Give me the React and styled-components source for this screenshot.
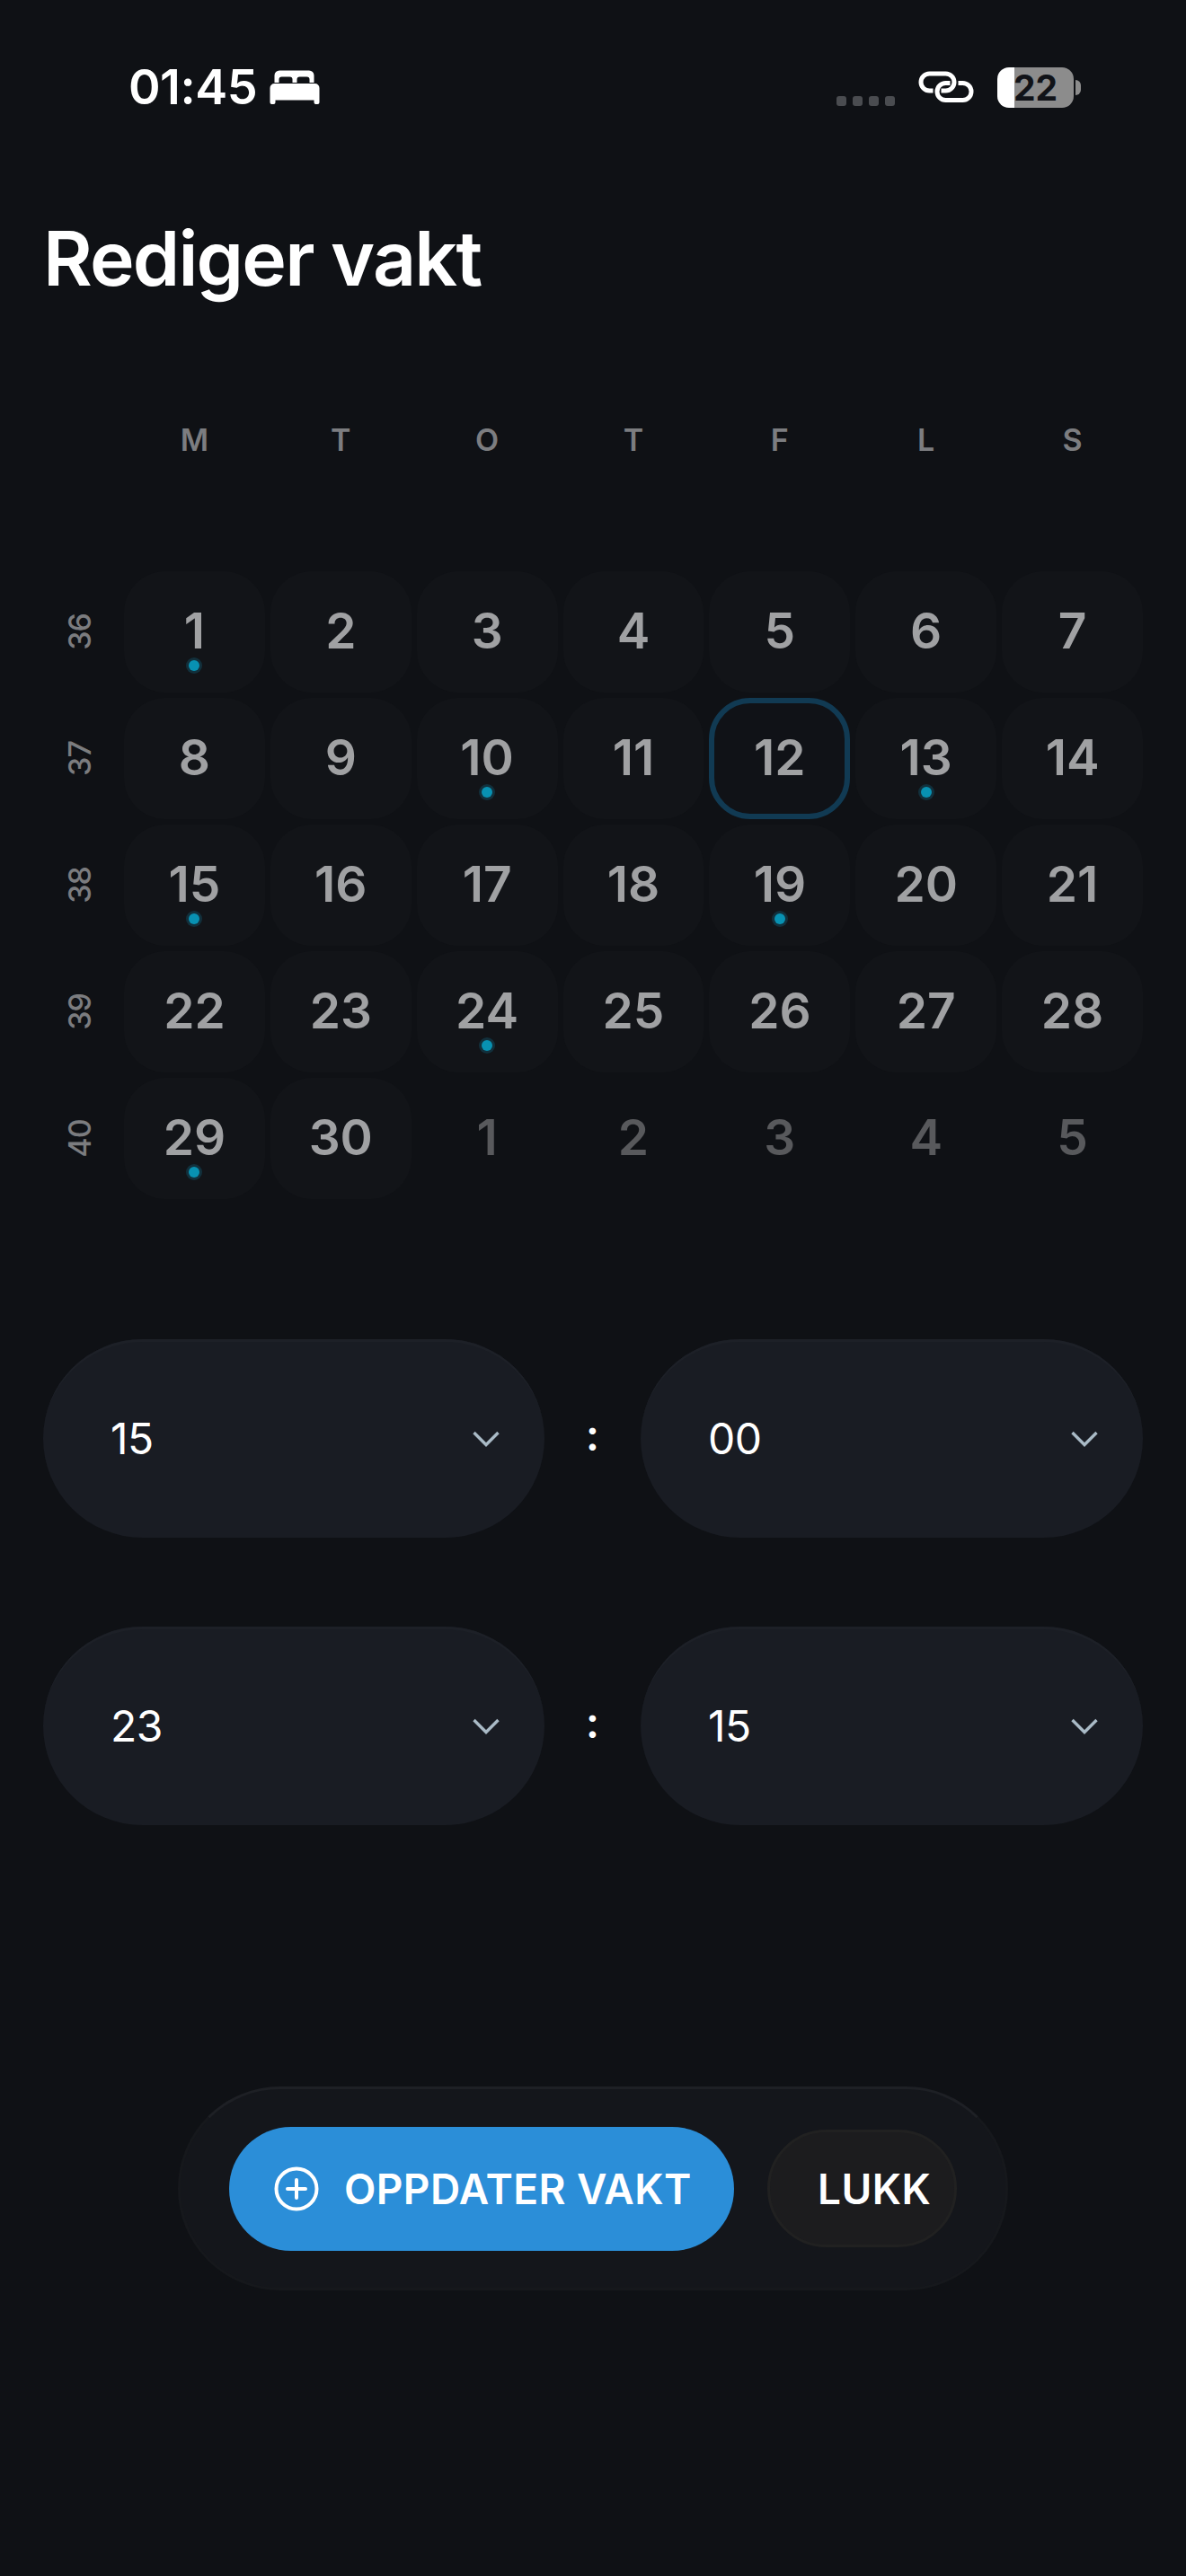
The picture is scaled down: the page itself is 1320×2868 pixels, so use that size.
import React from 'react';
import styled, { createGlobalStyle } from 'styled-components';

const Global = createGlobalStyle`
  html, body { margin: 0; padding: 0; background: #0f1115; }
  * { box-sizing: border-box; }
`;

const Page = styled.div`
  width: 1320px;
  height: 2868px;
  background: #0f1115;
  color: #fff;
  font-family: Inter, "Noto Sans", sans-serif;
  overflow: hidden;
  display: flex;
  flex-direction: column;
`;

const StatusBar = styled.div`
  height: 194px;
  padding: 0 117px 0 143px;
  display: flex;
  align-items: center;
  justify-content: space-between;
`;

const Clock = styled.div`
  display: flex;
  align-items: center;
  gap: 14px;
  font-size: 54px;
  font-weight: 600;
  line-height: 1;
  letter-spacing: -0.5px;
`;

const StatusIcons = styled.div`
  display: flex;
  align-items: center;
  gap: 26px;
`;

const Signal = styled.div`
  align-self: flex-end;
  margin-bottom: 2px;
  display: flex;
  gap: 7px;
`;

const SignalDot = styled.span`
  width: 11px;
  height: 11px;
  border-radius: 3px;
  background: #4a4c50;
`;

const Battery = styled.div`
  position: relative;
  width: 85px;
  height: 45px;
  margin-right: 8px;
  border-radius: 13px;
  background: linear-gradient(90deg, #fff 0, #fff 19px, #8c8c8c 19px);
  color: #111318;
  font-size: 39px;
  font-weight: 700;
  line-height: 45px;
  text-align: center;
  &::after {
    content: '';
    position: absolute;
    right: -8px;
    top: 14px;
    width: 6px;
    height: 17px;
    border-radius: 0 8px 8px 0;
    background: #8c8c8c;
  }
`;

const Title = styled.h1`
  margin: 44px 0 0;
  padding-left: 48px;
  font-size: 84px;
  font-weight: 600;
  line-height: 100px;
  letter-spacing: -1.8px;
`;

const Calendar = styled.div`
  margin-top: 132px;
  padding: 0 48px;
  display: grid;
  grid-template-columns: 84px repeat(7, 1fr);
  column-gap: 6px;
  row-gap: 6px;
  grid-auto-rows: 135px;
  grid-template-rows: 160px;
`;

const WeekHead = styled.div`
  grid-column: 2 / -1;
  display: grid;
  grid-template-columns: repeat(7, 1fr);
  column-gap: 6px;
`;

const WeekSpacer = styled.div``;

const DayName = styled.div`
  text-align: center;
  font-size: 34px;
  font-weight: 600;
  line-height: 40px;
  color: #7c7d80;
`;

const WeekNo = styled.div`
  display: flex;
  align-items: center;
  justify-content: center;
  margin-right: 4px;
  color: #7b7c7f;
  font-size: 34px;
  font-weight: 500;
  letter-spacing: -1px;
  span {
    display: block;
    transform: rotate(-90deg);
  }
`;

const Cell = styled.div`
  position: relative;
  display: flex;
  align-items: center;
  justify-content: center;
  border-radius: 46px;
  font-size: 55px;
  font-weight: 600;
  line-height: 1;
  padding-bottom: 3px;
  background: ${p => (p.$outside ? 'transparent' : '#121418')};
  color: ${p => (p.$outside ? '#58595c' : '#a0a1a3')};
  ${p => p.$selected && 'background: #101217; border: 6px solid #113a53;'}
`;

const EventDot = styled.span`
  position: absolute;
  left: 50%;
  bottom: 24px;
  width: 12px;
  height: 12px;
  margin-left: -6px;
  border-radius: 50%;
  background: #0891b2;
  box-shadow: 0 0 0 3px #12303c;
`;

const Times = styled.div`
  margin-top: 156px;
  padding: 0 48px;
  display: flex;
  flex-direction: column;
  gap: 99px;
`;

const TimeRow = styled.div`
  display: grid;
  grid-template-columns: 558px 1fr 559px;
  align-items: center;
`;

const Select = styled.div`
  height: 221px;
  border-radius: 111px;
  background: #191c23;
  box-shadow: inset 0 4px 0 -1px #1d2027;
  padding: 0 50px 0 75px;
  display: flex;
  align-items: center;
  justify-content: space-between;
  font-size: 48px;
  font-weight: 400;
  letter-spacing: -0.5px;
  color: #fff;
`;

const Colon = styled.div`
  text-align: center;
  font-size: 48px;
  font-weight: 600;
  line-height: 1;
  padding-bottom: 8px;
`;

const Dock = styled.div`
  margin: 291px auto 0;
  width: 924px;
  height: 227px;
  border-radius: 114px;
  background: #14161b;
  border: 3px solid #16181c;
  border-top-color: #1e2025;
  padding: 0 54px;
  display: flex;
  align-items: center;
  justify-content: space-between;
`;

const PrimaryButton = styled.div`
  width: 562px;
  height: 138px;
  border-radius: 69px;
  background: #2b8ed8;
  padding-left: 50px;
  display: flex;
  align-items: center;
  gap: 28px;
  font-size: 46px;
  font-weight: 600;
  letter-spacing: 0.4px;
  color: #fff;
`;

const CloseButton = styled.div`
  width: 211px;
  height: 131px;
  border-radius: 66px;
  background: #1c1c1e;
  border: 3px solid #212121;
  padding-left: 53px;
  display: flex;
  align-items: center;
  font-size: 46px;
  font-weight: 600;
  letter-spacing: 0.4px;
  color: #fff;
`;

const Bed = () => (
  <svg width="56" height="39" viewBox="7.5 9 56 39" fill="#fff">
    <path d="M13 23 V15 a5.5 5.5 0 0 1 5.5-5.5 H51.5 a5.5 5.5 0 0 1 5.5 5.5 V23 H52 V19.5 a3 3 0 0 0-3-3 H41 a3 3 0 0 0-3 3 V23 H33 V19.5 a3 3 0 0 0-3-3 H21 a3 3 0 0 0-3 3 V23 Z" />
    <path d="M13 24 H58 a5 5 0 0 1 5 5 V45 a2 2 0 0 1-2 2 H59 a2 2 0 0 1-2-2 V42.5 H14 V45 a2 2 0 0 1-2 2 H10 a2 2 0 0 1-2-2 V29 a5 5 0 0 1 5-5 Z" />
  </svg>
);

const LinkIcon = () => (
  <svg width="62" height="36" viewBox="7.5 11 62 36" fill="none" stroke="#fff" strokeWidth="5" strokeLinecap="butt">
    <path d="M24 33 H20 A9.5 9.5 0 0 1 20 14 H38 A9.5 9.5 0 0 1 38 33 H33" />
    <path d="M52 24.5 H57 A9.5 9.5 0 0 1 57 43.5 H38 A9.5 9.5 0 0 1 38 24.5 H43" />
  </svg>
);

const Chevron = () => (
  <svg width="30" height="18" viewBox="0 0 30 18" fill="none" stroke="#a9bac6" strokeWidth="3.4">
    <path d="M1.5 2 L15 15.5 L28.5 2" />
  </svg>
);

const PlusCircle = () => (
  <svg width="50" height="50" viewBox="0 0 50 50" fill="none" stroke="#fff" strokeWidth="4" strokeLinecap="round">
    <circle cx="25" cy="25" r="22.5" />
    <path d="M25 15 V35 M15 25 H35" />
  </svg>
);

const DAY_NAMES = ['M', 'T', 'O', 'T', 'F', 'L', 'S'];
const EVENTS = new Set([1, 10, 13, 15, 19, 24, 29]);
const WEEKS = [36, 37, 38, 39, 40];

const days = Array.from({ length: 35 }, (_, i) =>
  i < 30 ? { n: i + 1, outside: false } : { n: i - 29, outside: true }
);

const TIMES = [
  ['15', '00'],
  ['23', '15'],
];

export default function App() {
  return (
    <Page>
      <Global />
      <StatusBar>
        <Clock>
          01:45
          <Bed />
        </Clock>
        <StatusIcons>
          <Signal>
            <SignalDot />
            <SignalDot />
            <SignalDot />
            <SignalDot />
          </Signal>
          <LinkIcon />
          <Battery>22</Battery>
        </StatusIcons>
      </StatusBar>

      <Title>Rediger vakt</Title>

      <Calendar>
        <WeekSpacer />
        <WeekHead>
          {DAY_NAMES.map((d, i) => (
            <DayName key={i}>{d}</DayName>
          ))}
        </WeekHead>
        {WEEKS.map((w, r) => (
          <React.Fragment key={w}>
            <WeekNo>
              <span>{w}</span>
            </WeekNo>
            {days.slice(r * 7, r * 7 + 7).map(d => (
              <Cell key={`${d.n}-${d.outside}`} $outside={d.outside} $selected={!d.outside && d.n === 12}>
                {d.n}
                {!d.outside && EVENTS.has(d.n) && <EventDot />}
              </Cell>
            ))}
          </React.Fragment>
        ))}
      </Calendar>

      <Times>
        {TIMES.map(([h, m]) => (
          <TimeRow key={h}>
            <Select>
              {h}
              <Chevron />
            </Select>
            <Colon>:</Colon>
            <Select>
              {m}
              <Chevron />
            </Select>
          </TimeRow>
        ))}
      </Times>

      <Dock>
        <PrimaryButton>
          <PlusCircle />
          OPPDATER VAKT
        </PrimaryButton>
        <CloseButton>LUKK</CloseButton>
      </Dock>
    </Page>
  );
}
